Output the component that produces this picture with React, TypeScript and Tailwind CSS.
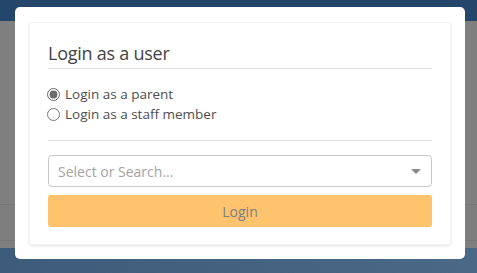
import React, { useState } from 'react';

const App: React.FC = () => {
  const [role, setRole] = useState<'parent' | 'staff'>('parent');

  return (
    <div className="relative w-[477px] h-[273px] overflow-hidden bg-[#7f7f7f] font-['Open_Sans',sans-serif]">
      {/* Page behind the overlay */}
      <div className="flex flex-col h-full">
        <div className="h-[21px] bg-[#23466a]" />
        <div className="h-[183px] bg-[#7f7f7f]" />
        <div className="h-[36px] border-t border-[#757575] bg-[#7e7e7e]" />
        <div className="h-[8px] border-t border-[#767676] bg-[#7f7f7f]" />
        <div className="flex-1 bg-gradient-to-r from-[#3d5c7b] to-[#4a6986]" />
      </div>

      {/* Modal */}
      <div className="absolute left-[15px] top-[7px] w-[450px] h-[252px] bg-white rounded-[5px] px-[14px] pt-[15px]">
        <div className="border border-[#f3f3f3] rounded-[3px] shadow-[0_1px_3px_rgba(0,0,0,0.12)] px-[18px] pt-[18px] pb-[17px]">
          <h2 className="text-[18px] leading-[24px] font-medium tracking-[-0.25px] text-[#444] pb-[3px] border-b border-[#e2e2e2]">
            Login as a user
          </h2>

          <div className="flex flex-col pt-[15px] pb-[16px] border-b border-[#e2e2e2] text-[13.5px] text-[#4e4e4e]">
            <label className="flex items-center h-[20px] gap-[5px] -ml-[1px]">
              <input
                type="radio"
                name="role"
                checked={role === 'parent'}
                onChange={() => setRole('parent')}
                className="w-[13px] h-[13px] m-0 accent-[#6b6b6b]"
              />
              Login as a parent
            </label>
            <label className="flex items-center h-[20px] gap-[5px] -ml-[1px]">
              <input
                type="radio"
                name="role"
                checked={role === 'staff'}
                onChange={() => setRole('staff')}
                className="w-[13px] h-[13px] m-0"
              />
              Login as a staff member
            </label>
          </div>

          <div className="pt-[14px] flex flex-col gap-[8px]">
            <div className="flex items-center justify-between h-[32px] border border-[#c8c8c8] rounded-[4px] pl-[9px] pr-[10px]">
              <span className="text-[14px] text-[#a3a3a3]">Select or Search...</span>
              <span className="w-0 h-0 border-l-[5px] border-r-[5px] border-t-[5px] border-l-transparent border-r-transparent border-t-[#8a8a8a]" />
            </div>
            <button className="h-[32px] rounded-[3px] bg-[#ffc36d] text-[14px] text-[#7a7f86]">
              Login
            </button>
          </div>
        </div>
      </div>
    </div>
  );
};

export default App;
